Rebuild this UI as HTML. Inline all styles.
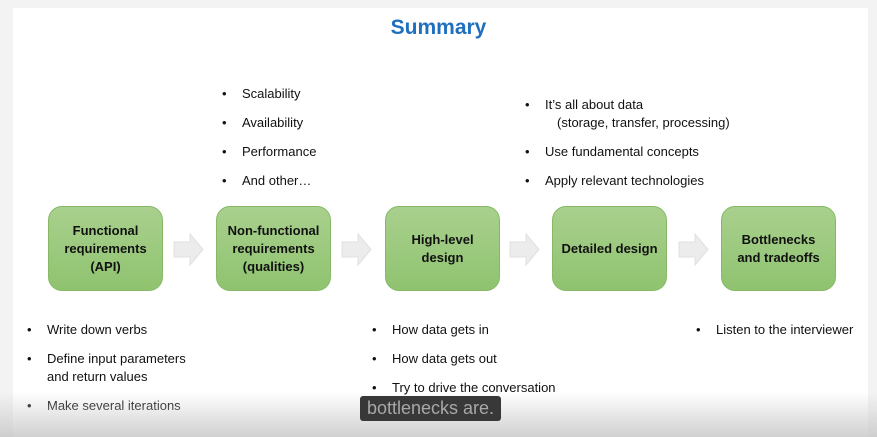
<!DOCTYPE html>
<html><head><meta charset="utf-8"><style>
body{margin:0;width:877px;height:437px;overflow:hidden;background:#f3f3f3;font-family:"Liberation Sans",sans-serif;position:relative}
.slide{position:absolute;left:13px;top:8px;width:855px;height:429px;background:#fff}
.fade{position:absolute;left:0;top:392px;width:877px;height:45px;background:linear-gradient(rgba(215,215,215,0),rgba(200,200,200,0.85))}
.t{position:absolute;font-size:13px;color:#111;white-space:nowrap}
.t:before{content:"•";position:absolute;left:-20px}
.nb:before{content:""}
.box{position:absolute;top:206px;width:115px;height:85px;border-radius:14px;background:linear-gradient(#a9d08e,#8fc36f);border:1px solid #86b866;box-sizing:border-box;display:flex;align-items:center;justify-content:center;text-align:center;font-weight:bold;font-size:13px;line-height:18px;color:#111}
.arr{position:absolute;top:233px}
h1{position:absolute;left:0;width:877px;top:16px;margin:0;text-align:center;color:#1f6fbf;font-size:21px;font-weight:bold}
.sub{position:absolute;left:360px;top:396px;width:141px;height:25px;background:#383838;border-radius:3px;color:#a8a8a8;font-size:18px;line-height:25px;text-align:center;white-space:nowrap;overflow:hidden}
</style></head><body>
<div class="slide"></div>
<h1>Summary</h1>
<div class="t" style="left:242px;top:86px">Scalability</div>
<div class="t" style="left:242px;top:115px">Availability</div>
<div class="t" style="left:242px;top:144px">Performance</div>
<div class="t" style="left:242px;top:173px">And other…</div>
<div class="t" style="left:545px;top:97px">It’s all about data</div>
<div class="t nb" style="left:557px;top:115px;">(storage, transfer, processing)</div>
<div class="t" style="left:545px;top:144px">Use fundamental concepts</div>
<div class="t" style="left:545px;top:173px">Apply relevant technologies</div>
<div class="box" style="left:48px">Functional<br>requirements<br>(API)</div>
<div class="box" style="left:216px">Non-functional<br>requirements<br>(qualities)</div>
<div class="box" style="left:385px">High-level<br>design</div>
<div class="box" style="left:552px">Detailed design</div>
<div class="box" style="left:721px">Bottlenecks<br>and tradeoffs</div>
<svg class="arr" style="left:173px" width="31" height="33"><path d="M1 9H17V1L30 16.5 17 32V24H1Z" fill="#ececec" stroke="#e0e0e0"/></svg>
<svg class="arr" style="left:341px" width="31" height="33"><path d="M1 9H17V1L30 16.5 17 32V24H1Z" fill="#ececec" stroke="#e0e0e0"/></svg>
<svg class="arr" style="left:509px" width="31" height="33"><path d="M1 9H17V1L30 16.5 17 32V24H1Z" fill="#ececec" stroke="#e0e0e0"/></svg>
<svg class="arr" style="left:678px" width="31" height="33"><path d="M1 9H17V1L30 16.5 17 32V24H1Z" fill="#ececec" stroke="#e0e0e0"/></svg>
<div class="t" style="left:47px;top:322px">Write down verbs</div>
<div class="t" style="left:47px;top:351px">Define input parameters</div>
<div class="t nb" style="left:47px;top:369px">and return values</div>
<div class="t" style="left:47px;top:398px">Make several iterations</div>
<div class="t" style="left:392px;top:322px">How data gets in</div>
<div class="t" style="left:392px;top:351px">How data gets out</div>
<div class="t" style="left:392px;top:380px">Try to drive the conversation</div>
<div class="t" style="left:716px;top:322px">Listen to the interviewer</div>
<div class="fade"></div>
<div class="sub">bottlenecks are.</div>
</body></html>
